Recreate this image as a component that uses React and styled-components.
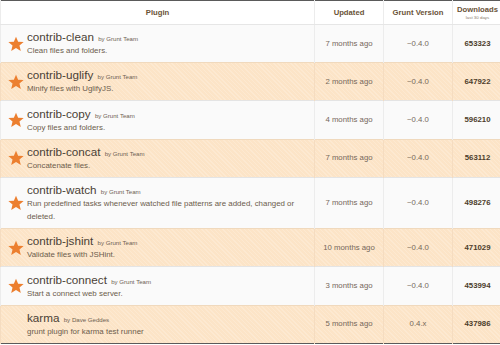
import React from 'react'
import styled, { createGlobalStyle } from 'styled-components'

const GlobalStyle = createGlobalStyle`
  html, body {
    margin: 0;
    padding: 0;
    background: #ffffff;
  }
  body {
    font-family: "Liberation Sans", Arial, sans-serif;
  }
`

const Table = styled.table`
  width: 500px;
  height: 344px;
  border-collapse: collapse;
  table-layout: fixed;
  border: 1px solid #5a5a5a;
`

const Th = styled.th`
  width: ${p => p.width}px;
  height: 23px;
  padding: 0;
  background: #ffffff;
  color: #6a5338;
  font-size: 7.7px;
  font-weight: bold;
  text-align: center;
  vertical-align: middle;
  border-bottom: 1px solid #e6e6e6;
  border-left: 1px solid #ececec;
  line-height: 9px;
`

const Sub = styled.div`
  font-size: 4.4px;
  font-weight: normal;
  color: #8a7a6a;
  line-height: 7px;
`

const Row = styled.tr`
  background-color: ${p => (p.alt ? '#fce4c7' : '#fafafa')};
  background-image: ${p =>
    p.alt
      ? 'repeating-linear-gradient(45deg, rgba(255,255,255,0.18) 0 1px, transparent 1px 3px)'
      : 'none'};
`

const Td = styled.td`
  padding: 0;
  text-align: center;
  vertical-align: middle;
  font-size: 7.8px;
  line-height: 10px;
  color: ${p => (p.strong ? '#4d3d2b' : '#76685a')};
  font-weight: ${p => (p.strong ? 'bold' : 'normal')};
  border-top: 1px solid ${p => (p.alt ? '#f0d9bd' : '#e4e4e4')};
  border-left: 1px solid ${p => (p.alt ? '#f5dcc0' : '#ececec')};
`

const PluginCell = styled.div`
  display: flex;
  align-items: center;
  padding: 5px 8px 5px 0;
  text-align: left;
`

const StarSlot = styled.div`
  width: 26px;
  height: 16px;
  flex: none;
  display: flex;
  justify-content: center;
  padding-left: 3px;
  box-sizing: border-box;
  line-height: 0;
`

const Info = styled.div`
  flex: 1;
  min-width: 0;
`

const Name = styled.div`
  height: 14px;
  line-height: 14px;
  font-size: 11.7px;
  color: #4a3f36;
  white-space: nowrap;
`

const By = styled.span`
  font-size: 6.1px;
  line-height: 1;
  color: #6e6152;
  margin-left: 1px;
`

const Desc = styled.div`
  font-size: 7.9px;
  line-height: 13px;
  color: #6c5c4c;
`

const Star = () => (
  <svg width="16" height="16" viewBox="0 0 24 24">
    <path
      d="M12 1l3.2 7.5 8.3.6-6.3 5.3 2 8.1L12 18.1l-7.2 4.4 2-8.1L.5 9.1l8.3-.6z"
      fill="#ec7f2f"
    />
  </svg>
)

const plugins = [
  { name: 'contrib-clean', by: 'Grunt Team', desc: 'Clean files and folders.', updated: '7 months ago', version: '~0.4.0', downloads: 653323, star: true },
  { name: 'contrib-uglify', by: 'Grunt Team', desc: 'Minify files with UglifyJS.', updated: '2 months ago', version: '~0.4.0', downloads: 647922, star: true },
  { name: 'contrib-copy', by: 'Grunt Team', desc: 'Copy files and folders.', updated: '4 months ago', version: '~0.4.0', downloads: 596210, star: true },
  { name: 'contrib-concat', by: 'Grunt Team', desc: 'Concatenate files.', updated: '7 months ago', version: '~0.4.0', downloads: 563112, star: true },
  { name: 'contrib-watch', by: 'Grunt Team', desc: 'Run predefined tasks whenever watched file patterns are added, changed or deleted.', updated: '7 months ago', version: '~0.4.0', downloads: 498276, star: true },
  { name: 'contrib-jshint', by: 'Grunt Team', desc: 'Validate files with JSHint.', updated: '10 months ago', version: '~0.4.0', downloads: 471029, star: true },
  { name: 'contrib-connect', by: 'Grunt Team', desc: 'Start a connect web server.', updated: '3 months ago', version: '~0.4.0', downloads: 453994, star: true },
  { name: 'karma', by: 'Dave Geddes', desc: 'grunt plugin for karma test runner', updated: '5 months ago', version: '0.4.x', downloads: 437986, star: false },
]

export default function App() {
  return (
    <>
      <GlobalStyle />
      <Table>
        <thead>
          <tr>
            <Th width={313}>Plugin</Th>
            <Th width={68}>Updated</Th>
            <Th width={68}>Grunt Version</Th>
            <Th width={49}>
              Downloads
              <Sub>last 30 days</Sub>
            </Th>
          </tr>
        </thead>
        <tbody>
          {plugins.map((p, i) => {
            const alt = i % 2 === 1
            return (
              <Row key={p.name} alt={alt}>
                <Td alt={alt}>
                  <PluginCell>
                    <StarSlot>{p.star && <Star />}</StarSlot>
                    <Info>
                      <Name>
                        {p.name} <By>by {p.by}</By>
                      </Name>
                      <Desc>{p.desc}</Desc>
                    </Info>
                  </PluginCell>
                </Td>
                <Td alt={alt}>{p.updated}</Td>
                <Td alt={alt}>{p.version}</Td>
                <Td alt={alt} strong>{p.downloads}</Td>
              </Row>
            )
          })}
        </tbody>
      </Table>
    </>
  )
}
